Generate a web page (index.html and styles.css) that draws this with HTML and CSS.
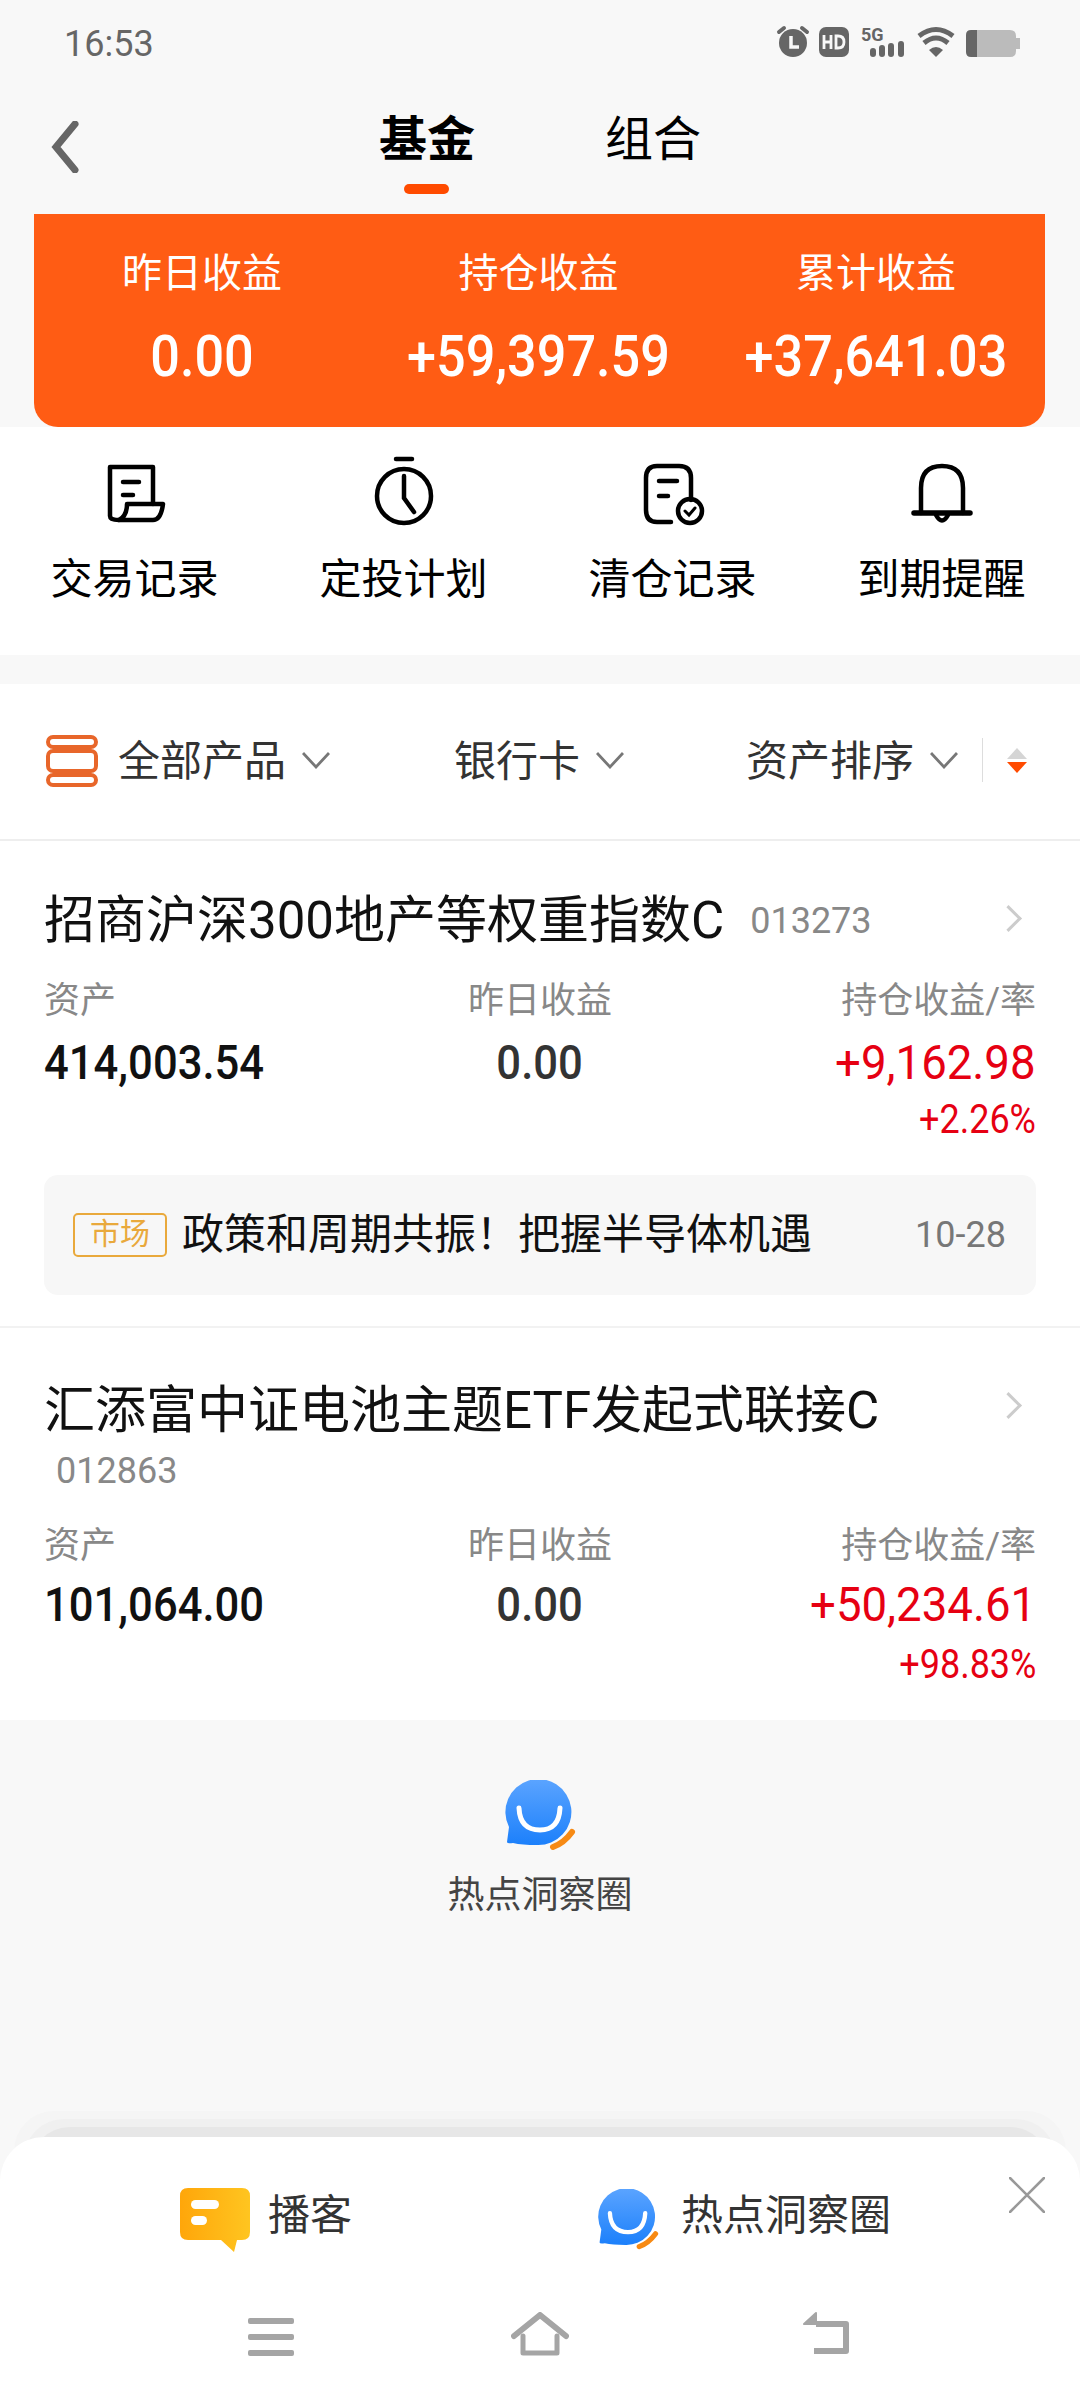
FILE: index.html
```html
<!DOCTYPE html>
<html>
<head>
  <title>基金</title>
  <link rel="stylesheet" href="styles.css">
</head>
<body>

<!-- Status bar -->
<div class="status">
  <span class="time">16:53</span>
  <svg class="status-icons" width="246" height="36" viewBox="0 0 246 36">
    <g fill="#666">
      <circle cx="17" cy="19" r="14"/>
      <rect x="43" y="3" width="30" height="30" rx="7"/>
      <rect x="94" y="24" width="6" height="9" rx="3"/>
      <rect x="103" y="21" width="6" height="12" rx="3"/>
      <rect x="112" y="19" width="6" height="14" rx="3"/>
      <rect x="122" y="17" width="6" height="16" rx="3"/>
      <path d="M160 33 L153 26 Q160 20 167 26 Z"/>
      <path d="M190 11 Q190 6 195 6 H201 V33 H195 Q190 33 190 28 Z"/>
    </g>
    <g fill="none" stroke="#666" stroke-width="4" stroke-linecap="round">
      <path d="M3 8 L8 4"/>
      <path d="M31 8 L26 4"/>
      <path d="M143 12 Q160 -1 177 12" stroke-width="5" stroke-linecap="butt"/>
      <path d="M148 19 Q160 9 172 19" stroke-width="5" stroke-linecap="butt"/>
    </g>
    <path d="M201 6 H234 Q240 6 240 12 V14 H244 V25 H240 V27 Q240 33 234 33 H201 Z" fill="#bbb"/>
    <path d="M48 11 V25 M48 18 H55 M55 11 V25" fill="none" stroke="#f8f8f8" stroke-width="2.8"/>
    <path d="M60 12 H62 Q68 12 68 18 Q68 24 62 24 H60 Z" fill="none" stroke="#f8f8f8" stroke-width="2.8"/>
    <text class="five-g" x="85" y="17">5G</text>
    <path d="M15 12 V23 H23" fill="none" stroke="#f8f8f8" stroke-width="3.5"/>
  </svg>
</div>

<!-- Header with tabs -->
<div class="header">
  <svg class="back" width="30" height="52" viewBox="0 0 30 52"><path d="M25 3 L6 26 L25 49" fill="none" stroke="#666" stroke-width="7" stroke-linecap="round"/></svg>
  <div class="tabs">
    <div class="tab tab-active">基金<i></i></div>
    <div class="tab">组合</div>
  </div>
</div>

<!-- Profit card -->
<div class="profit">
  <div class="profit-col"><p>昨日收益</p><b>0.00</b></div>
  <div class="profit-col"><p>持仓收益</p><b>+59,397.59</b></div>
  <div class="profit-col"><p>累计收益</p><b>+37,641.03</b></div>
</div>

<!-- Shortcuts -->
<div class="shortcuts">
  <div class="shortcut">
    <svg width="64" height="64" viewBox="0 0 64 64" fill="none" stroke="#000" stroke-width="4.5" stroke-linecap="round" stroke-linejoin="round">
      <path d="M16 58 Q7 58 7 54 V5 H50 V42"/>
      <path d="M16 58 H50 Q58 58 60 42 H24 Q24 54 16 58 Z"/>
      <path d="M20 20 H36 M20 33 H30"/>
    </svg>
    <span>交易记录</span>
  </div>
  <div class="shortcut">
    <svg width="64" height="70" viewBox="0 0 64 70" fill="none" stroke="#000" stroke-width="4.5" stroke-linecap="round">
      <path d="M24 3 H40"/>
      <circle cx="32" cy="40" r="27"/>
      <path d="M32 20 V42 L42 56"/>
    </svg>
    <span>定投计划</span>
  </div>
  <div class="shortcut">
    <svg width="64" height="64" viewBox="0 0 64 64" fill="none" stroke="#000" stroke-width="4.5" stroke-linecap="round">
      <path d="M30 60 H16 Q5 60 5 48 V16 Q5 4 16 4 H38 Q50 4 50 16 V38"/>
      <path d="M18 19 H36 M18 34 H27"/>
      <circle cx="49" cy="49" r="12"/>
      <path d="M44 49 L48 53 L54 46" stroke-width="3"/>
    </svg>
    <span>清仓记录</span>
  </div>
  <div class="shortcut">
    <svg width="64" height="64" viewBox="0 0 64 64" fill="none" stroke="#000" stroke-width="4.5" stroke-linecap="round">
      <path d="M11 51 V26 Q11 4 32 4 Q53 4 53 26 V51"/>
      <path d="M4 51 H60" stroke-width="5.5"/>
      <path d="M26 53 Q32 64 38 53"/>
    </svg>
    <span>到期提醒</span>
  </div>
</div>

<div class="gap"></div>

<!-- Filters -->
<div class="filters">
  <div class="filter filter-all">
    <svg class="stack" width="52" height="52" viewBox="0 0 52 52" fill="none" stroke="#e8662a" stroke-width="4">
      <rect x="2" y="2" width="48" height="10" rx="5"/>
      <rect x="2" y="16" width="48" height="20" rx="5"/>
      <rect x="2" y="40" width="48" height="10" rx="5"/>
    </svg>
    <span>全部产品</span>
    <svg class="chev" width="28" height="17" viewBox="0 0 28 17"><path d="M1 1 L14 15 L27 1" fill="none" stroke="#777" stroke-width="2.8"/></svg>
  </div>
  <div class="filter filter-card">
    <span>银行卡</span>
    <svg class="chev" width="28" height="17" viewBox="0 0 28 17"><path d="M1 1 L14 15 L27 1" fill="none" stroke="#777" stroke-width="2.8"/></svg>
  </div>
  <div class="filter filter-sort">
    <span>资产排序</span>
    <svg class="chev" width="28" height="17" viewBox="0 0 28 17"><path d="M1 1 L14 15 L27 1" fill="none" stroke="#777" stroke-width="2.8"/></svg>
    <div class="sort-arrows"><i class="up"></i><i class="down"></i></div>
  </div>
</div>

<!-- Fund 1 -->
<div class="fund">
  <div class="fund-title">
    <span class="fund-name">招商沪深300地产等权重指数C</span>
    <span class="fund-code">013273</span>
    <em class="more"></em>
  </div>
  <div class="fund-stats">
    <div class="stat"><label>资产</label><b>414,003.54</b></div>
    <div class="stat stat-mid"><label>昨日收益</label><b>0.00</b></div>
    <div class="stat stat-end"><label>持仓收益/率</label><b class="red">+9,162.98</b><span class="red">+2.26%</span></div>
  </div>
  <div class="news">
    <span class="news-tag">市场</span>
    <span class="news-text">政策和周期共振！把握半导体机遇</span>
    <span class="news-date">10-28</span>
  </div>
</div>

<!-- Fund 2 -->
<div class="fund fund-two">
  <div class="fund-title">
    <span class="fund-name">汇添富中证电池主题ETF发起式联接C</span>
    <em class="more"></em>
  </div>
  <div class="fund-code-line">012863</div>
  <div class="fund-stats">
    <div class="stat"><label>资产</label><b>101,064.00</b></div>
    <div class="stat stat-mid"><label>昨日收益</label><b>0.00</b></div>
    <div class="stat stat-end"><label>持仓收益/率</label><b class="red">+50,234.61</b><span class="red">+98.83%</span></div>
  </div>
</div>

<!-- Hot topic link -->
<div class="hot">
  <svg width="72" height="72" viewBox="0 0 72 72">
    <defs><linearGradient id="blue1" x1="0" y1="0" x2="0" y2="1"><stop offset="0" stop-color="#5ba4ff"/><stop offset="1" stop-color="#1c80fb"/></linearGradient></defs>
    <path d="M3 62 L5 47 A33 33 0 1 1 33 65 Q18 65 9 63 Q3 64 3 62 Z" fill="url(#blue1)"/>
    <path d="M15 28 Q16 50 36 50 Q55 50 56 28" fill="none" stroke="#fff" stroke-width="5" stroke-linecap="round"/>
    <path d="M49 67 Q60 63 68 52" fill="none" stroke="#f78a14" stroke-width="6" stroke-linecap="round"/>
  </svg>
  <span>热点洞察圈</span>
</div>

<!-- Bottom sheet -->
<div class="sheet">
  <div class="sheet-shadow s1"></div>
  <div class="sheet-shadow s2"></div>
  <div class="sheet-shadow s3"></div>
  <div class="sheet-body">
    <div class="sheet-links">
      <div class="sheet-link link-pod">
        <svg width="70" height="64" viewBox="0 0 70 64">
          <defs><linearGradient id="gold" x1="0" y1="0" x2="1" y2="0"><stop offset="0" stop-color="#ffa60a"/><stop offset="1" stop-color="#ffc520"/></linearGradient></defs>
          <path d="M8 0 H62 Q70 0 70 8 V44 Q70 52 62 52 H57 L54 64 L41 52 H8 Q0 52 0 44 V8 Q0 0 8 0 Z" fill="url(#gold)"/>
          <rect x="11" y="12" width="28" height="9" rx="4.5" fill="#fff"/>
          <rect x="11" y="28" width="16" height="9" rx="4.5" fill="#fff"/>
        </svg>
        <span>播客</span>
      </div>
      <div class="sheet-link link-hot">
        <svg width="62" height="62" viewBox="0 0 72 72">
          <path d="M3 62 L5 47 A33 33 0 1 1 33 65 Q18 65 9 63 Q3 64 3 62 Z" fill="url(#blue1)"/>
          <path d="M15 28 Q16 50 36 50 Q55 50 56 28" fill="none" stroke="#fff" stroke-width="5" stroke-linecap="round"/>
          <path d="M49 67 Q60 63 68 52" fill="none" stroke="#f78a14" stroke-width="6" stroke-linecap="round"/>
        </svg>
        <span>热点洞察圈</span>
      </div>
    </div>
    <svg class="close" width="36" height="36" viewBox="0 0 36 36"><path d="M1 1 L35 35 M35 1 L1 35" stroke="#999" stroke-width="2.6" stroke-linecap="round"/></svg>
    <div class="navbar">
      <svg width="46" height="38" viewBox="0 0 46 38" fill="#a5a5a5"><rect y="0" width="46" height="6" rx="2"/><rect y="16" width="46" height="6" rx="2"/><rect y="32" width="46" height="6" rx="2"/></svg>
      <svg width="58" height="44" viewBox="0 0 58 44" fill="none" stroke="#a5a5a5" stroke-width="6" stroke-linejoin="round" stroke-linecap="round"><path d="M3 24 L29 3 L55 24"/><path d="M12 24 V41 H46 V24" stroke-width="5"/></svg>
      <svg width="50" height="44" viewBox="0 0 50 44" fill="none" stroke="#a5a5a5" stroke-width="6" stroke-linejoin="round"><path d="M14 12 H44 V39 H12"/><path d="M14 1 L2 12 H14 Z" fill="#a5a5a5" stroke-width="2"/></svg>
    </div>
  </div>
</div>

</body>
</html>
```

FILE: styles.css
```css
html, body { margin: 0; padding: 0; }
body {
  width: 1080px; height: 2400px; overflow: hidden; position: relative;
  background: #f8f8f8; color: #000;
  font-family: Roboto, "Noto Sans CJK SC", sans-serif;
}
p { margin: 0; }
i, em { font-style: normal; display: block; }

.status { height: 88px; display: flex; justify-content: space-between; align-items: center; padding: 0 58px 0 64px; }
.time { font-size: 36px; color: #666; }
.status-icons { margin-top: -4px; }
.five-g { font-size: 18px; font-weight: 700; fill: #666; }

.header { height: 126px; position: relative; display: flex; justify-content: center; }
.back { position: absolute; left: 50px; top: 33px; }
.tabs { display: flex; gap: 130px; padding-top: 22px; }
.tab { position: relative; font-size: 48px; line-height: 60px; }
.tab-active { font-weight: 700; }
.tab-active i { position: absolute; left: 25px; top: 74px; width: 45px; height: 10px; border-radius: 5px; background: #ff4b00; }

.profit {
  margin: 0 35px 0 34px; height: 213px; background: #ff5c14; color: #fff;
  border-radius: 0 0 24px 24px; display: grid; grid-template-columns: 336px 337px 338px;
}
.profit-col { text-align: center; }
.profit-col p { font-size: 40px; line-height: 48px; margin-top: 36px; }
.profit-col b { display: block; font-size: 58px; line-height: 60px; font-weight: 500; margin-top: 28px; transform: scaleX(.9); }

.shortcuts { background: #fff; height: 228px; display: grid; grid-template-columns: repeat(4, 269px); }
.shortcut { display: flex; flex-direction: column; align-items: center; justify-content: flex-end; padding-bottom: 49px; }
.shortcut span { font-size: 42px; line-height: 52px; margin-top: 28px; }

.gap { height: 29px; }

.filters { background: #fff; height: 155px; border-bottom: 2px solid #eee; display: flex; align-items: center; }
.filter { display: flex; align-items: center; font-size: 42px; color: #333; margin-top: -3px; }
.filter span { margin-bottom: 6px; }
.chev { margin-left: 16px; }
.filter-all { margin-left: 46px; width: 408px; }
.stack { margin-right: 20px; margin-top: 2px; }
.filter-card { width: 292px; }
.sort-arrows { margin-left: 24px; border-left: 1px solid #ddd; padding-left: 24px; height: 44px; display: flex; flex-direction: column; justify-content: center; gap: 3px; }
.sort-arrows i { width: 0; height: 0; border-left: 10px solid transparent; border-right: 10px solid transparent; }
.sort-arrows .up { border-bottom: 11px solid #d5d5d5; }
.sort-arrows .down { border-top: 11px solid #ff4b00; }

.fund { background: #fff; padding: 0 44px; height: 485px; border-bottom: 2px solid #f2f2f2; }
.fund-two { height: 392px; border-bottom: 0; }
.fund-title { display: flex; align-items: center; height: 60px; padding-top: 50px; position: relative; }
.fund-two .fund-title { padding-top: 53px; }
.fund-name { font-size: 51px; line-height: 60px; color: #111; }
.fund-code { font-size: 36px; color: #888; margin-left: 26px; }
.fund-code-line { font-size: 36px; line-height: 44px; color: #888; margin: 8px 0 0 12px; }
.more { position: absolute; right: 18px; top: 68px; width: 16px; height: 16px; border-top: 3px solid #ccc; border-right: 3px solid #ccc; transform: rotate(45deg); }
.fund-stats { display: flex; justify-content: space-between; margin-top: 28px; }
.fund-two .fund-stats { margin-top: 31px; }
.stat { display: flex; flex-direction: column; width: 340px; }
.stat label { font-size: 36px; line-height: 44px; color: #888; }
.stat b { font-size: 49px; line-height: 52px; font-weight: 500; margin-top: 14px; color: #111; transform: scaleX(.89); transform-origin: left center; }
.fund-two .stat b { margin-top: 11px; }
.stat-mid { align-items: center; width: 300px; }
.stat-mid b { color: #333; transform-origin: center; }
.stat-end { align-items: flex-end; }
.stat .red { color: #e60012; }
.stat-end b { font-weight: 400; transform: scaleX(.93); transform-origin: right center; }
.stat-end span { font-size: 40px; line-height: 44px; margin-top: 9px; transform: scaleX(.9); transform-origin: right center; }
.fund-two .stat-end span { margin-top: 12px; }

.news { margin-top: 33px; height: 120px; background: #f7f7f7; border-radius: 14px; display: flex; align-items: center; padding: 0 30px 0 29px; }
.news-tag { width: 94px; height: 44px; box-sizing: border-box; border: 2px solid #e9a93c; border-radius: 5px; font-size: 30px; line-height: 38px; text-align: center; color: #e9a93c; }
.news-text { font-size: 42px; margin: 0 0 9px 15px; color: #111; flex: 1; }
.news-date { font-size: 36px; color: #777; }

.hot { display: flex; flex-direction: column; align-items: center; padding-top: 60px; }
.hot span { font-size: 37px; line-height: 44px; color: #444; margin-top: 22px; }

.sheet { position: absolute; left: 0; right: 0; bottom: 0; height: 263px; }
.sheet-shadow { position: absolute; border-radius: 40px 40px 0 0; height: 60px; }
.s1 { left: 14px; right: 14px; top: -26px; background: #f5f5f5; }
.s2 { left: 24px; right: 24px; top: -18px; background: #f0f0f0; }
.s3 { left: 30px; right: 30px; top: -10px; background: #e7e7e7; }
.sheet-body { position: absolute; inset: 0; background: #fff; border-radius: 44px 44px 0 0; }
.sheet-links { display: flex; padding-top: 48px; height: 70px; align-items: center; }
.sheet-link { display: flex; align-items: center; color: #333; font-size: 42px; }
.sheet-link span { margin-bottom: 18px; }
.link-pod { margin-left: 180px; width: 417px; }
.link-pod span { margin-left: 18px; }
.link-hot span { margin-left: 22px; }
.close { position: absolute; left: 1009px; top: 40px; }
.navbar { position: absolute; left: 0; top: 175px; width: 100%; }
.navbar svg { position: absolute; }
.navbar svg:nth-child(1) { left: 248px; top: 6px; }
.navbar svg:nth-child(2) { left: 511px; top: 0; }
.navbar svg:nth-child(3) { left: 802px; top: 0; }
```
